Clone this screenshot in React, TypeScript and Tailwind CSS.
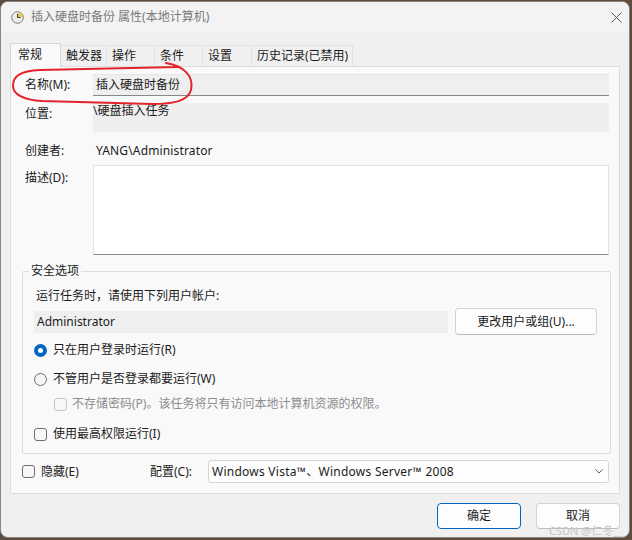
import React from "react";

const font = "font-['Noto_Sans','Noto_Sans_CJK_SC',sans-serif]";

function Radio({ checked }: { checked?: boolean }) {
  return checked ? (
    <span className="w-[13px] h-[13px] rounded-full bg-[#0067c0] flex items-center justify-center shrink-0">
      <span className="w-[5px] h-[5px] rounded-full bg-white" />
    </span>
  ) : (
    <span className="w-[13px] h-[13px] rounded-full border border-[#6e6e6e] bg-[#f6f6f6] shrink-0" />
  );
}

function Check({ disabled }: { disabled?: boolean }) {
  return (
    <span
      className={
        "w-[13px] h-[13px] rounded-[3px] border bg-[#f7f7f7] shrink-0 " +
        (disabled ? "border-[#c8c8c8]" : "border-[#6e6e6e]")
      }
    />
  );
}

export default function App() {
  const tabs = ["触发器", "操作", "条件", "设置", "历史记录(已禁用)"];
  const widths = ["w-[46px]", "w-[48px]", "w-[48px]", "w-[49px]", "w-[101px]"];

  return (
    <div className={`w-[632px] h-[540px] bg-[#5e4d3e] pt-[1px] relative ${font} text-[12px] text-[#1b1b1b]`}>
      <div className="w-[630px] h-[537px] rounded-[8px] border border-[#8a847f] bg-[#f0f0f0] overflow-hidden flex flex-col">
        {/* title bar */}
        <div className="h-[30px] bg-[#f3f3f3] flex items-center shrink-0">
          <svg className="ml-[10px]" width="13" height="13" viewBox="0 0 13 13">
            <circle cx="6.5" cy="6.5" r="5.8" fill="#ececec" stroke="#7d7d7d" strokeWidth="1" />
            <path d="M6.5 1.5 A5 5 0 0 1 11.5 6.5 L6.5 6.5 Z" fill="#f2c94c" />
            <path d="M6.5 3 V6.5 H9.5" fill="none" stroke="#3c3c3c" strokeWidth="1" />
          </svg>
          <span className="ml-[7px] text-[#7a7a7a] leading-[16px]">插入硬盘时备份 属性(本地计算机)</span>
          <svg className="ml-auto mr-[7px]" width="11" height="11" viewBox="0 0 11 11">
            <path d="M0.5 0.5 L10.5 10.5 M10.5 0.5 L0.5 10.5" stroke="#5c5c5c" strokeWidth="1" />
          </svg>
        </div>

        {/* tabs */}
        <div className="mt-[11px] ml-[9px] flex items-end h-[24px]">
          <div className="relative z-10 w-[51px] h-[24px] bg-[#f9f9f9] border border-b-0 border-[#d6d6d6] pl-[7px] pt-[3px] leading-[16px]">
            常规
          </div>
          {tabs.map((t, i) => (
            <div
              key={t}
              className={`${widths[i]} h-[22px] border-t border-r border-[#e1e1e1] pl-[5px] pt-[2px] leading-[16px] bg-[#f0f0f0]`}
            >
              {t}
            </div>
          ))}
        </div>

        {/* panel */}
        <div className="-mt-[1px] ml-[9px] w-[610px] h-[428px] border border-[#dcdcdc] bg-[#f9f9f9] flex flex-col">
          <div className="pl-[14px] flex flex-col">
            <div className="mt-[7px] flex h-[22px]">
              <span className="w-[68px] flex items-center">名称(M):</span>
              <div className="w-[516px] bg-[#efefef] border-t border-[#e6e6e6] border-b border-b-[#888888] flex items-center pl-[3px]">
                插入硬盘时备份
              </div>
            </div>
            <div className="mt-[7px] flex h-[29px]">
              <span className="w-[68px] pt-[3px] leading-[16px]">位置:</span>
              <div className="w-[516px] bg-[#eeeeee] leading-[16px]">\硬盘插入任务</div>
            </div>
            <div className="mt-[11px] flex h-[16px] leading-[16px]">
              <span className="w-[68px]">创建者:</span>
              <span className="pl-[3px] tracking-[0.15px]">YANG\Administrator</span>
            </div>
            <div className="mt-[6px] flex h-[90px]">
              <span className="w-[68px] pt-[5px] leading-[16px]">描述(D):</span>
              <div className="w-[516px] bg-white border border-[#e3e3e3] border-b-[#8a8a8a]" />
            </div>
          </div>

          {/* security group */}
          <div className="relative mt-[16px] ml-[11px] w-[589px] h-[183px] border border-[#dcdcdc] rounded-[2px] flex flex-col">
            <span className="absolute -top-[9px] left-[6px] px-[2px] bg-[#f9f9f9] leading-[16px]">安全选项</span>
            <div className="mt-[16px] pl-[13px] leading-[16px]">运行任务时，请使用下列用户帐户:</div>
            <div className="mt-[4px] flex items-center h-[27px]">
              <div className="ml-[11px] w-[414px] h-[22px] bg-[#efefef] flex items-center pl-[3px]">Administrator</div>
              <button className="ml-[7px] w-[142px] h-[27px] rounded-[4px] bg-[#fdfdfd] border border-[#d3d3d3] border-b-[#bdbdbd] leading-[16px]">
                更改用户或组(U)...
              </button>
            </div>
            <div className="mt-[7px] ml-[11px] flex items-center gap-[6px] h-[16px] leading-[16px]">
              <Radio checked />
              <span>只在用户登录时运行(R)</span>
            </div>
            <div className="mt-[13px] ml-[11px] flex items-center gap-[6px] h-[16px] leading-[16px]">
              <Radio />
              <span>不管用户是否登录都要运行(W)</span>
            </div>
            <div className="mt-[9px] ml-[31px] flex items-center gap-[5px] h-[16px] leading-[16px]">
              <Check disabled />
              <span className="text-[#8c8c8c]">不存储密码(P)。该任务将只有访问本地计算机资源的权限。</span>
            </div>
            <div className="mt-[14px] ml-[11px] flex items-center gap-[6px] h-[16px] leading-[16px]">
              <Check />
              <span>使用最高权限运行(I)</span>
            </div>
          </div>

          {/* bottom row */}
          <div className="mt-[6px] ml-[11px] flex items-center h-[23px]">
            <div className="w-[128px] flex items-center gap-[6px] leading-[16px]">
              <Check />
              <span>隐藏(E)</span>
            </div>
            <span className="w-[58px] leading-[16px]">配置(C):</span>
            <div className="w-[401px] h-[23px] rounded-[3px] bg-[#fdfdfd] border border-[#d6d6d6] flex items-center pl-[3px] pr-[5px]">
              <span className="leading-[16px] tracking-[0.25px]">Windows Vista™、Windows Server™ 2008</span>
              <svg className="ml-auto" width="8" height="5" viewBox="0 0 8 5">
                <path d="M0.5 0.5 L4 4 L7.5 0.5" fill="none" stroke="#606060" strokeWidth="1" />
              </svg>
            </div>
          </div>
        </div>

        {/* buttons */}
        <div className="mt-[9px] flex justify-end gap-[15px] pr-[9px]">
          <button className="w-[84px] h-[26px] rounded-[4px] bg-[#fdfdfd] border border-[#0067c0] leading-[12px]">确定</button>
          <button className="w-[84px] h-[26px] rounded-[4px] bg-[#fdfdfd] border border-[#d3d3d3] border-b-[#bdbdbd] leading-[12px]">
            取消
          </button>
        </div>
      </div>

      {/* red annotation */}
      <svg className="absolute left-0 top-0 pointer-events-none" width="632" height="540">
        <path
          d="M166 63 C184 66 194 76 191 90 C188 101 174 104 152 104 L42 101 C23 100 13 94 13 86 C13 76 20 71 40 70 L178 67"
          fill="none"
          stroke="#e3242b"
          strokeWidth="2"
          strokeLinecap="round"
        />
      </svg>

      {/* watermark */}
      <span className="absolute left-[549px] top-[525px] text-[11px] leading-[12px] text-[#c4c4c4]">CSDN @仁冬__</span>
    </div>
  );
}
